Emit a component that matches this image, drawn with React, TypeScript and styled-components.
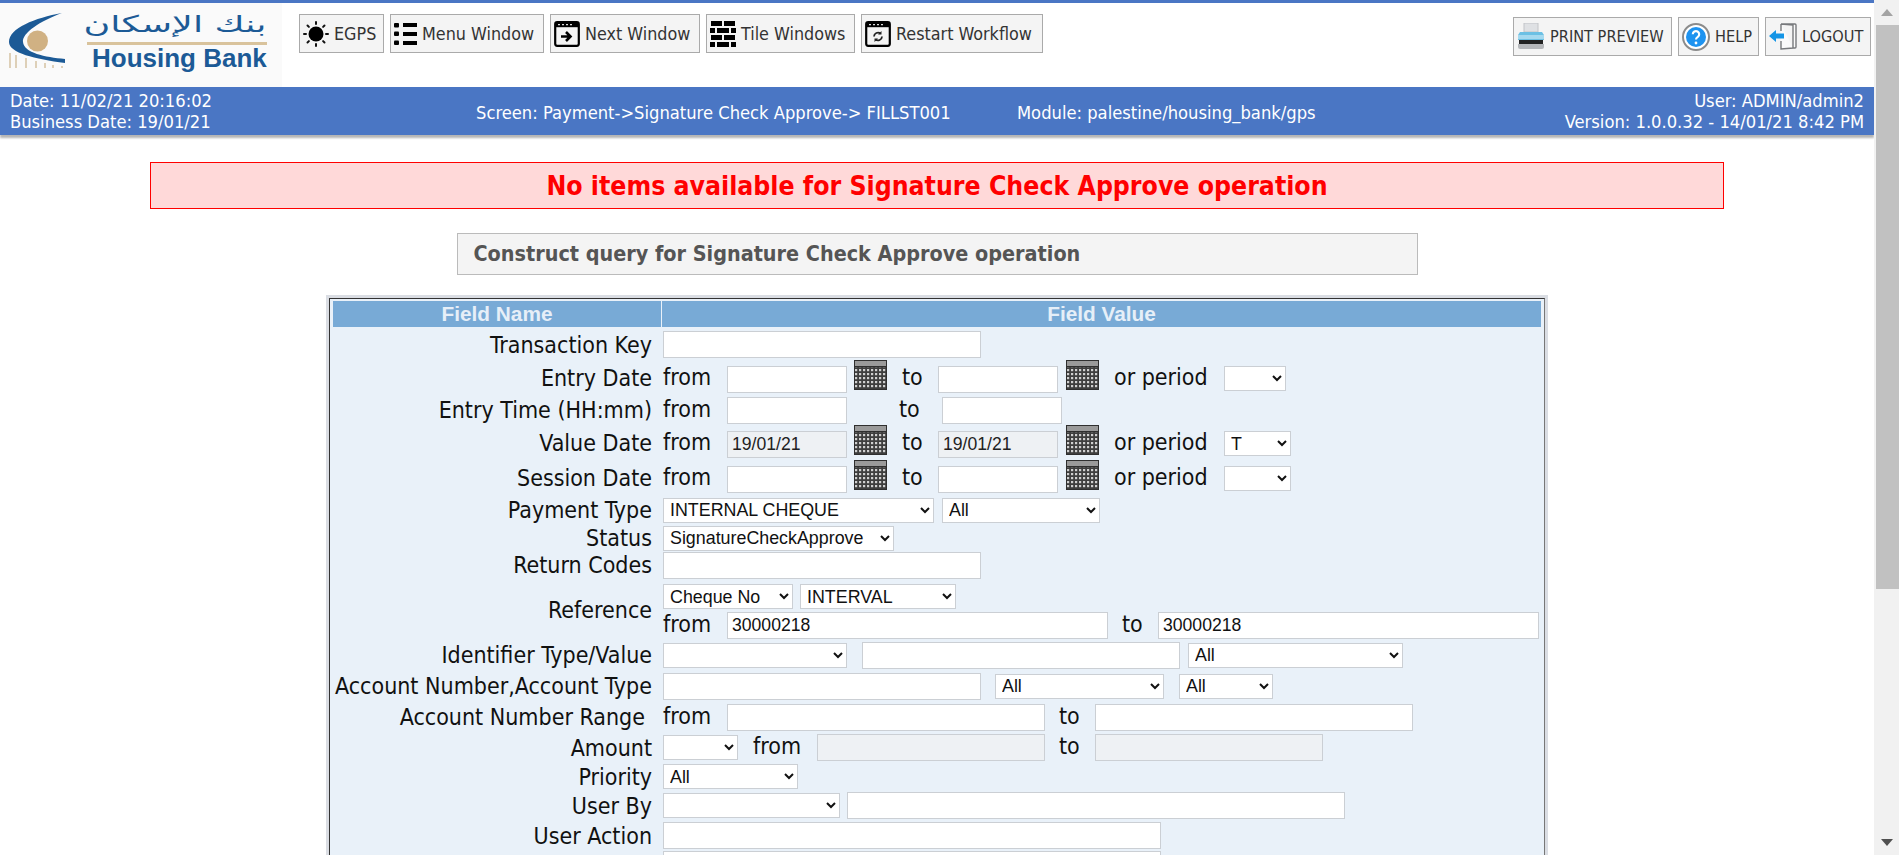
import React from "react";
import styled, { createGlobalStyle } from "styled-components";

const UI = `"DejaVu Sans Condensed", "Noto Sans", sans-serif`;
const FIELD = `"Liberation Sans", Arial, sans-serif`;

const Global = createGlobalStyle`
  html { overflow: hidden; background: #fff; }
  body { margin: 0; font-family: ${UI}; color: #111; }
`;

const Shell = styled.div`
  display: flex;
  height: 100vh;
  overflow: hidden;
`;
const Page = styled.div`
  flex: 1;
  min-width: 0;
  height: 100vh;
  overflow: hidden;
  display: flex;
  flex-direction: column;
  align-items: center;
`;
const ScrollRail = styled.div`
  width: 25px;
  flex: none;
  background: #f1f1f1;
  display: flex;
  flex-direction: column;
  align-items: flex-end;
`;
const ScrollArrow = styled.div<{ $down?: boolean }>`
  width: 25px;
  height: 25px;
  flex: none;
  display: flex;
  align-items: center;
  justify-content: center;
  margin-top: ${(p) => (p.$down ? "auto" : 0)};
  &::before {
    content: "";
    border-left: 6px solid transparent;
    border-right: 6px solid transparent;
    border-bottom: ${(p) => (p.$down ? "0" : "7px solid #a3a3a3")};
    border-top: ${(p) => (p.$down ? "7px solid #505050" : "0")};
  }
`;
const ScrollThumb = styled.div`
  width: 23px;
  height: 564px;
  flex: none;
  background: #c1c1c1;
`;
const Header = styled.header`
  align-self: stretch;
  flex: none;
  border-top: 3px solid #4a76c4;
  box-shadow: 0 3px 2px #b5b5b5;
`;
const TopBar = styled.div`
  height: 84px;
  display: flex;
  justify-content: space-between;
  background: #fff;
`;
const LeftGroup = styled.div`
  display: flex;
  align-items: flex-start;
`;
const LogoBox = styled.div`
  width: 282px;
  height: 84px;
  background: #fafafa;
  margin-right: 17px;
`;
const Tools = styled.nav<{ $top: number; $fs: number }>`
  display: flex;
  gap: 6px;
  padding-top: ${(p) => p.$top}px;
  padding-right: 3px;
  font-size: ${(p) => p.$fs}px;
`;
const ToolButton = styled.button<{ $w: number }>`
  width: ${(p) => p.$w}px;
  height: 39px;
  box-sizing: border-box;
  display: flex;
  align-items: center;
  gap: 5px;
  padding: 0 0 0 3px;
  background: #f4f4f4;
  border: 1px solid #aaa;
  font-family: ${UI};
  font-size: inherit;
  color: #333;
  white-space: nowrap;
`;
const InfoBar = styled.div`
  height: 48px;
  background: #4a76c4;
  color: #fff;
  font-size: 18.2px;
  line-height: 21px;
  display: grid;
  grid-template-columns: 476px 541px 1fr auto;
  align-items: center;
  padding: 0 10px;
`;
const InfoRight = styled.div`
  text-align: right;
`;
const InfoShift = styled.div`
  margin-left: -10px;
  padding-top: 2px;
`;
const Alert = styled.div`
  width: 1574px;
  height: 47px;
  flex: none;
  box-sizing: border-box;
  margin-top: 27px;
  border: 1px solid #f00;
  background: #ffd9d9;
  color: #f00;
  font: bold 26.4px/45px ${UI};
  text-align: center;
`;
const QueryTitle = styled.div`
  width: 961px;
  height: 42px;
  flex: none;
  box-sizing: border-box;
  margin-top: 24px;
  padding-left: 16px;
  border: 1px solid #bbb;
  background: #f4f4f4;
  color: #555;
  font: bold 21.4px/40px ${UI};
`;
const FormFrame = styled.div`
  width: 1222px;
  min-height: 900px;
  flex: none;
  box-sizing: border-box;
  margin-top: 20px;
  border: 3px solid #dadde3;
  background: #e9f1f9;
  display: flex;
`;
const FormInset = styled.div`
  flex: 1;
  border: 1px solid;
  border-color: #333 #777 #777 #333;
  padding: 2px 3px;
`;
const HeadRow = styled.div`
  display: grid;
  grid-template-columns: 328px 1fr;
  gap: 1px;
  height: 26px;
  margin-bottom: 2px;
`;
const HeadCell = styled.div`
  background: #78aad6;
  color: #e6eff8;
  font: bold 20.8px/26px ${FIELD};
  text-align: center;
`;
const Row = styled.div<{ $h: number }>`
  display: grid;
  grid-template-columns: 328px 1fr;
  column-gap: 2px;
  height: ${(p) => p.$h}px;
`;
const Label = styled.div<{ $pad?: number }>`
  align-self: center;
  text-align: right;
  white-space: nowrap;
  padding-right: ${(p) => p.$pad ?? 9}px;
  font-size: 23px;
  line-height: 24px;
  color: #111;
`;
const Cell = styled.div`
  display: flex;
  align-items: center;
  min-width: 0;
`;
const DateCell = styled(Cell)`
  align-items: flex-end;
  padding-bottom: 2px;
`;
const StackCell = styled.div`
  display: flex;
  flex-direction: column;
  padding-top: 5px;
  gap: 3px;
`;
const Line = styled.div`
  display: flex;
  align-items: center;
`;
const Word = styled.span<{ $w: number; $pad?: number; $raise?: number }>`
  width: ${(p) => p.$w}px;
  flex: none;
  box-sizing: border-box;
  padding-left: ${(p) => p.$pad ?? 0}px;
  padding-bottom: ${(p) => p.$raise ?? 3}px;
  font-size: 23px;
  line-height: 24px;
  white-space: nowrap;
  align-self: center;
`;
const TextField = styled.input<{ $w: number; $ml?: number }>`
  width: ${(p) => p.$w}px;
  height: 27px;
  flex: none;
  box-sizing: border-box;
  margin: 0 0 0 ${(p) => p.$ml ?? 0}px;
  padding: 0 4px;
  border: 1px solid #cbcfd4;
  background: #fff;
  color: #111;
  font: 17.6px ${FIELD};
  outline: none;
  &:disabled {
    background: #eef1f4;
    color: #222;
  }
`;
const Choice = styled.select<{ $w: number; $ml?: number }>`
  width: ${(p) => p.$w}px;
  height: 25px;
  flex: none;
  box-sizing: border-box;
  margin: 0 0 0 ${(p) => p.$ml ?? 0}px;
  padding: 0 0 0 2px;
  border: 1px solid #cbcfd4;
  border-radius: 0;
  background-color: #fff;
  color: #111;
  font: 17.85px ${FIELD};
`;
const PeriodChoice = styled(Choice)`
  align-self: flex-start;
  margin-top: 6px;
`;
const CalendarSlot = styled.span<{ $ml: number; $mr: number }>`
  align-self: flex-start;
  flex: none;
  height: 30px;
  margin: 0 ${(p) => p.$mr}px 0 ${(p) => p.$ml}px;
`;

const Logo = () => (
  <svg width="282" height="84" viewBox="0 0 282 84">
    <path d="M62 10 C35 15 9 25 9 39 C9 50 35 56 65 60 L65 56 C45 54 24 50 23 39 C22 30 40 18 62 10 Z" fill="#1c5a96" />
    <circle cx="37.5" cy="38" r="10.5" fill="#d0b183" />
    <path d="M10 50V65M16 52V65M26 55V65M36 58V65M45 60V65M53 62V65M62 63V65" stroke="#d8c6a8" strokeWidth="1.6" />
    <text x="175" y="29" textAnchor="middle" textLength="183" lengthAdjust="spacingAndGlyphs" fontFamily="DejaVu Sans, sans-serif" fontSize="23" fill="#1c5a96">بنك الإسكان</text>
    <rect x="87" y="39" width="180" height="3" fill="#d9c39c" />
    <text x="92" y="64" fontFamily="Liberation Sans, Arial, sans-serif" fontWeight="700" fontSize="26" fill="#1c5a96">Housing Bank</text>
  </svg>
);

const SunIcon = () => (
  <svg width="26" height="26" viewBox="0 0 26 26">
    <circle cx="13" cy="13" r="7.5" fill="#000" />
    <path d="M13 1v2M13 23v2M1 13h2M23 13h2M4.5 4.5l1.4 1.4M20.1 20.1l1.4 1.4M4.5 21.5l1.4-1.4M20.1 5.9l1.4-1.4" stroke="#111" strokeWidth="2" strokeLinecap="round" />
  </svg>
);
const MenuIcon = () => (
  <svg width="23" height="24" viewBox="0 0 23 24" fill="#000">
    <rect x="0" y="1" width="5" height="4.5" rx="1" />
    <rect x="0" y="9.5" width="5" height="4.5" rx="1" />
    <rect x="0" y="18.5" width="5" height="4.5" rx="1" />
    <rect x="9" y="1" width="14" height="4" />
    <rect x="9" y="10" width="14" height="4" />
    <rect x="9" y="19" width="14" height="4" />
  </svg>
);
const WindowFrame = () => (
  <>
    <rect x="1.2" y="1.2" width="23.6" height="23.6" rx="2" fill="none" stroke="#000" strokeWidth="2.2" />
    <rect x="1.2" y="1.2" width="23.6" height="5" fill="#000" />
    <path d="M4 3.6h2M8 3.6h2M12 3.6h2M16 3.6h2" stroke="#ddd" strokeWidth="1.2" />
  </>
);
const NextIcon = () => (
  <svg width="26" height="26" viewBox="0 0 26 26">
    <WindowFrame />
    <path d="M7 15.5h9M12 11l4.5 4.5L12 20" fill="none" stroke="#000" strokeWidth="2.6" />
  </svg>
);
const TileIcon = () => (
  <svg width="26" height="26" viewBox="0 0 26 26" fill="#000">
    <rect x="1" y="0" width="11" height="5" />
    <rect x="14" y="0" width="11" height="5" />
    <rect x="0" y="7" width="5" height="5" />
    <rect x="7" y="7" width="12" height="5" />
    <rect x="21" y="7" width="5" height="5" />
    <rect x="1" y="14" width="11" height="5" />
    <rect x="14" y="14" width="11" height="5" />
    <rect x="0" y="21" width="5" height="5" />
    <rect x="7" y="21" width="12" height="5" />
    <rect x="21" y="21" width="5" height="5" />
  </svg>
);
const RestartIcon = () => (
  <svg width="26" height="26" viewBox="0 0 26 26">
    <WindowFrame />
    <path d="M9 15.5a4 4 0 0 1 6.5-3M17 15.5a4 4 0 0 1-6.5 3" fill="none" stroke="#222" strokeWidth="1.8" />
    <path d="M16.5 10v3.5H13M9.5 21v-3.5H13" fill="#222" />
  </svg>
);
const PrintIcon = () => (
  <svg width="28" height="27" viewBox="0 0 28 27">
    <rect x="7" y="0" width="14" height="9" fill="#dfe1e4" stroke="#c2c4c8" />
    <path d="M3 9h22l2 3v5H1v-5z" fill="#6cc0e4" />
    <rect x="1" y="12" width="26" height="4" fill="#a5d9ef" />
    <rect x="2" y="17" width="24" height="4" fill="#222" />
    <path d="M1 21h26v3a2 2 0 0 1-2 2H3a2 2 0 0 1-2-2z" fill="#b5b7ba" />
  </svg>
);
const HelpIcon = () => (
  <svg width="28" height="28" viewBox="0 0 28 28">
    <circle cx="14" cy="14" r="13" fill="#fff" stroke="#8b8b8b" strokeWidth="2" />
    <circle cx="14" cy="14" r="10" fill="#1e93f0" />
    <path d="M10.8 11.2a3.2 3.2 0 1 1 5 2.7c-1.2.8-1.8 1.3-1.8 2.6" fill="none" stroke="#fff" strokeWidth="2.2" />
    <circle cx="14" cy="20" r="1.4" fill="#fff" />
  </svg>
);
const LogoutIcon = () => (
  <svg width="28" height="27" viewBox="0 0 28 27">
    <path d="M12 1h14a1 1 0 0 1 1 1v22a1 1 0 0 1-1 1h-2M12 1v7M12 18v8l12-1V2L12 1" fill="#fafafa" stroke="#77797c" strokeWidth="1.4" />
    <path d="M0 13l7-6v3.5h8v5H7V19z" fill="#1495e6" />
  </svg>
);

const Calendar = () => (
  <svg width="33" height="30" viewBox="0 0 33 30">
    <defs>
      <pattern id="calGrid" width="4" height="4" patternUnits="userSpaceOnUse">
        <rect width="4" height="4" fill="#3e3e3e" />
        <rect x="1" y="1" width="2.2" height="2.2" fill="#cfcfcf" />
      </pattern>
    </defs>
    <rect width="33" height="30" fill="#2f2f2f" />
    <rect x="1" y="1" width="31" height="5" fill="#9a9a9a" />
    <rect x="1" y="7" width="31" height="22" fill="url(#calGrid)" />
  </svg>
);

const Cal = ({ ml, mr }: { ml: number; mr: number }) => (
  <CalendarSlot $ml={ml} $mr={mr}>
    <Calendar />
  </CalendarSlot>
);

const DateLine = ({ from, to, period, periodW }: { from?: string; to?: string; period?: string; periodW: number }) => (
  <DateCell>
    <Word $w={64} $raise={0}>from</Word>
    <TextField $w={120} defaultValue={from} disabled={!!from} />
    <Cal ml={7} mr={15} />
    <Word $w={36} $raise={0}>to</Word>
    <TextField $w={120} defaultValue={to} disabled={!!to} />
    <Cal ml={8} mr={15} />
    <Word $w={110} $raise={0}>or period</Word>
    <PeriodChoice $w={periodW} defaultValue={period ?? ""}>
      <option value=""></option>
      <option value="T">T</option>
    </PeriodChoice>
  </DateCell>
);

const Pick = ({ w, ml, value }: { w: number; ml?: number; value?: string }) => (
  <Choice $w={w} $ml={ml} defaultValue={value ?? ""}>
    <option value={value ?? ""}>{value ?? ""}</option>
  </Choice>
);

export default function App() {
  return (
    <Shell>
      <Global />
      <Page>
        <Header>
          <TopBar>
            <LeftGroup>
              <LogoBox>
                <Logo />
              </LogoBox>
              <Tools $top={11} $fs={17.8}>
                <ToolButton $w={85}><SunIcon />EGPS</ToolButton>
                <ToolButton $w={154}><MenuIcon />Menu Window</ToolButton>
                <ToolButton $w={150}><NextIcon />Next Window</ToolButton>
                <ToolButton $w={149}><TileIcon />Tile Windows</ToolButton>
                <ToolButton $w={182}><RestartIcon />Restart Workflow</ToolButton>
              </Tools>
            </LeftGroup>
            <Tools $top={14} $fs={16.2}>
              <ToolButton $w={159}><PrintIcon />PRINT PREVIEW</ToolButton>
              <ToolButton $w={81}><HelpIcon />HELP</ToolButton>
              <ToolButton $w={106}><LogoutIcon />LOGOUT</ToolButton>
            </Tools>
          </TopBar>
          <InfoBar>
            <div>
              Date: 11/02/21 20:16:02
              <br />
              Business Date: 19/01/21
            </div>
            <InfoShift>Screen: Payment-&gt;Signature Check Approve-&gt; FILLST001</InfoShift>
            <InfoShift>Module: palestine/housing_bank/gps</InfoShift>
            <InfoRight>
              User: ADMIN/admin2
              <br />
              Version: 1.0.0.32 - 14/01/21 8:42 PM
            </InfoRight>
          </InfoBar>
        </Header>

        <Alert>No items available for Signature Check Approve operation</Alert>
        <QueryTitle>Construct query for Signature Check Approve operation</QueryTitle>

        <FormFrame>
          <FormInset>
            <HeadRow>
              <HeadCell>Field Name</HeadCell>
              <HeadCell>Field Value</HeadCell>
            </HeadRow>

            <Row $h={31}>
              <Label>Transaction Key</Label>
              <Cell><TextField $w={318} /></Cell>
            </Row>
            <Row $h={35}>
              <Label>Entry Date</Label>
              <DateLine periodW={62} />
            </Row>
            <Row $h={30}>
              <Label>Entry Time (HH:mm)</Label>
              <Cell>
                <Word $w={64}>from</Word>
                <TextField $w={120} />
                <Word $w={95} $pad={52}>to</Word>
                <TextField $w={120} />
              </Cell>
            </Row>
            <Row $h={35}>
              <Label>Value Date</Label>
              <DateLine from="19/01/21" to="19/01/21" period="T" periodW={67} />
            </Row>
            <Row $h={35}>
              <Label>Session Date</Label>
              <DateLine periodW={67} />
            </Row>
            <Row $h={30}>
              <Label>Payment Type</Label>
              <Cell>
                <Pick w={271} value="INTERNAL CHEQUE" />
                <Pick w={158} ml={8} value="All" />
              </Cell>
            </Row>
            <Row $h={26}>
              <Label>Status</Label>
              <Cell><Pick w={231} value="SignatureCheckApprove" /></Cell>
            </Row>
            <Row $h={28}>
              <Label>Return Codes</Label>
              <Cell><TextField $w={318} /></Cell>
            </Row>
            <Row $h={61}>
              <Label>Reference</Label>
              <StackCell>
                <Line>
                  <Pick w={130} value="Cheque No" />
                  <Pick w={156} ml={7} value="INTERVAL" />
                </Line>
                <Line>
                  <Word $w={64}>from</Word>
                  <TextField $w={381} defaultValue="30000218" />
                  <Word $w={50} $pad={14}>to</Word>
                  <TextField $w={381} defaultValue="30000218" />
                </Line>
              </StackCell>
            </Row>
            <Row $h={30}>
              <Label>Identifier Type/Value</Label>
              <Cell>
                <Pick w={184} />
                <TextField $w={318} $ml={15} />
                <Pick w={215} ml={8} value="All" />
              </Cell>
            </Row>
            <Row $h={32}>
              <Label>Account Number,Account Type</Label>
              <Cell>
                <TextField $w={318} />
                <Pick w={169} ml={14} value="All" />
                <Pick w={94} ml={15} value="All" />
              </Cell>
            </Row>
            <Row $h={30}>
              <Label $pad={16}>Account Number Range</Label>
              <Cell>
                <Word $w={64}>from</Word>
                <TextField $w={318} />
                <Word $w={50} $pad={14}>to</Word>
                <TextField $w={318} />
              </Cell>
            </Row>
            <Row $h={31}>
              <Label>Amount</Label>
              <Cell>
                <Pick w={75} />
                <Word $w={79} $pad={15}>from</Word>
                <TextField $w={228} disabled />
                <Word $w={50} $pad={14}>to</Word>
                <TextField $w={228} disabled />
              </Cell>
            </Row>
            <Row $h={27}>
              <Label>Priority</Label>
              <Cell><Pick w={135} value="All" /></Cell>
            </Row>
            <Row $h={31}>
              <Label>User By</Label>
              <Cell>
                <Pick w={177} />
                <TextField $w={498} $ml={7} />
              </Cell>
            </Row>
            <Row $h={29}>
              <Label>User Action</Label>
              <Cell><TextField $w={498} /></Cell>
            </Row>
            <Row $h={29}>
              <Label />
              <Cell><TextField $w={498} /></Cell>
            </Row>
          </FormInset>
        </FormFrame>
      </Page>
      <ScrollRail>
        <ScrollArrow />
        <ScrollThumb />
        <ScrollArrow $down />
      </ScrollRail>
    </Shell>
  );
}
